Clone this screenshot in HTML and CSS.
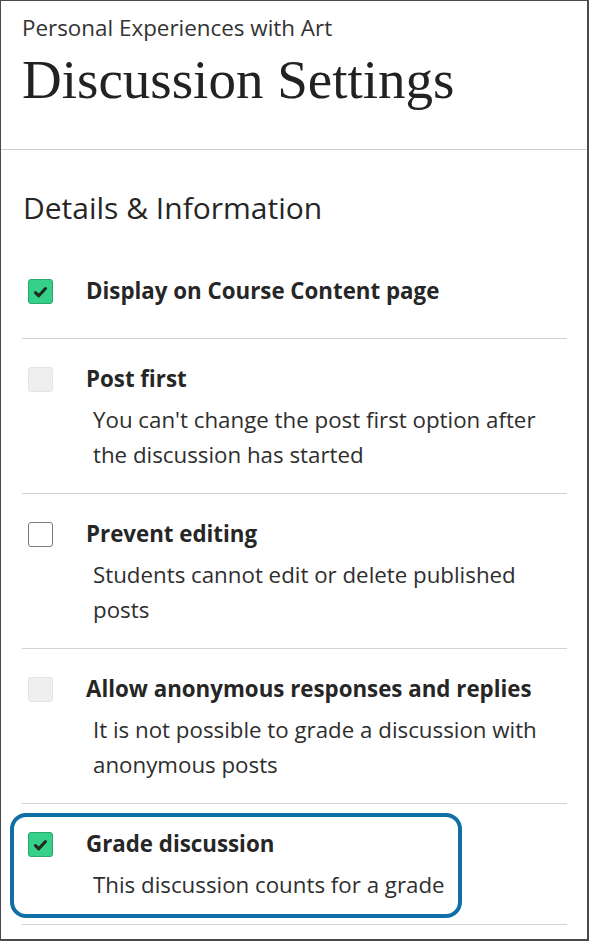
FILE: index.html
```html
<!DOCTYPE html>
<html lang="en">
<head>
<meta charset="utf-8">
<title>Discussion Settings</title>
<link rel="stylesheet" href="styles.css">
</head>
<body>
<div class="frame">
  <header class="page-header">
    <p class="crumb">Personal Experiences with Art</p>
    <h1 class="title">Discussion Settings</h1>
  </header>
  <section class="details">
    <h2 class="section-title">Details &amp; Information</h2>
    <ul class="options">
      <li class="option option--solo">
        <span class="box box--checked"><svg viewBox="0 0 24 24" width="24" height="24"><path d="M6.8 12.6l3.4 3.4 7-7.6" fill="none" stroke="#1d2b23" stroke-width="3.2" stroke-linecap="round" stroke-linejoin="round"/></svg></span>
        <div class="text">
          <div class="label">Display on Course Content page</div>
        </div>
      </li>
      <li class="option">
        <span class="box box--disabled"></span>
        <div class="text">
          <div class="label">Post first</div>
          <div class="desc">You can't change the post first option after the discussion has started</div>
        </div>
      </li>
      <li class="option">
        <span class="box"></span>
        <div class="text">
          <div class="label">Prevent editing</div>
          <div class="desc">Students cannot edit or delete published posts</div>
        </div>
      </li>
      <li class="option">
        <span class="box box--disabled"></span>
        <div class="text">
          <div class="label">Allow anonymous responses and replies</div>
          <div class="desc">It is not possible to grade a discussion with anonymous posts</div>
        </div>
      </li>
      <li class="option option--last">
        <span class="box box--checked"><svg viewBox="0 0 24 24" width="24" height="24"><path d="M6.8 12.6l3.4 3.4 7-7.6" fill="none" stroke="#1d2b23" stroke-width="3.2" stroke-linecap="round" stroke-linejoin="round"/></svg></span>
        <div class="text">
          <div class="label">Grade discussion</div>
          <div class="desc">This discussion counts for a grade</div>
        </div>
        <span class="highlight"></span>
      </li>
    </ul>
  </section>
</div>
</body>
</html>
```

FILE: styles.css
```css
* { box-sizing: border-box; }

html, body {
  margin: 0;
  padding: 0;
  background: #ffffff;
}

body {
  font-family: "Open Sans", "Noto Sans", sans-serif;
  color: #262626;
}

.frame {
  width: 589px;
  height: 941px;
  border-top: 1px solid #4a4a4a;
  border-left: 1px solid #4a4a4a;
  border-right: 2px solid #4a4a4a;
  border-bottom: 2px solid #4a4a4a;
  overflow: hidden;
  background: #fff;
}

.page-header {
  padding: 13px 21px 0 21px;
  height: 149px;
  border-bottom: 1px solid #cdcdcd;
}

.crumb {
  margin: 0;
  font-size: 22.4px;
  line-height: 28px;
  color: #333333;
}

.title {
  margin: 5px 0 0 0;
  font-family: "Liberation Serif", "Times New Roman", serif;
  font-weight: 400;
  font-size: 55px;
  line-height: 66px;
  color: #222222;
}

.details {
  padding: 38px 20px 0 21px;
}

.section-title {
  margin: 0 0 23px 1px;
  font-size: 30px;
  line-height: 40px;
  font-weight: 400;
  color: #262626;
}

.options {
  list-style: none;
  margin: 0;
  padding: 0;
}

.option {
  position: relative;
  display: flex;
  align-items: flex-start;
  padding: 23px 0 21px 6px;
  border-top: 1px solid #d2d2d2;
}

.option--solo {
  border-top: none;
  padding-bottom: 30px;
}

.option--last {
  border-bottom: 1px solid #d2d2d2;
}

.box {
  flex: none;
  width: 25px;
  height: 25px;
  margin-top: 5px;
  border: 1px solid #7b7b7b;
  border-radius: 3px;
  background: #fff;
  display: flex;
  align-items: center;
  justify-content: center;
}

.box--checked {
  background: #36d08b;
  border-color: #27a86e;
}

.box--disabled {
  background: #efefef;
  border-color: #e4e4e4;
}

.text {
  margin-left: 33px;
}

.label {
  font-size: 22.3px;
  line-height: 34px;
  font-weight: 700;
  color: #262626;
}

.desc {
  margin-top: 7px;
  padding-left: 7px;
  font-size: 22.3px;
  line-height: 34.5px;
  color: #2e2e2e;
}

.highlight {
  position: absolute;
  top: 9px;
  left: -12px;
  width: 452px;
  height: 105px;
  border: 4px solid #0f6fa6;
  border-radius: 16px;
  pointer-events: none;
}
```
